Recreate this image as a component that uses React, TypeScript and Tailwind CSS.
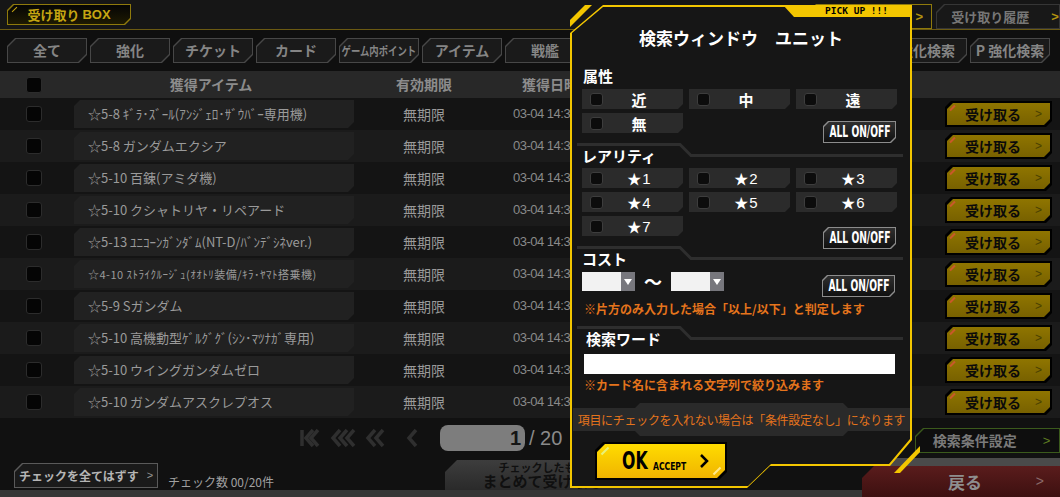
import React from "react";

const CUT8 = "[clip-path:polygon(8px_0,100%_0,100%_calc(100%_-_8px),calc(100%_-_8px)_100%,0_100%,0_8px)]";
const CUT6 = "[clip-path:polygon(6px_0,100%_0,100%_calc(100%_-_6px),calc(100%_-_6px)_100%,0_100%,0_6px)]";
const CUT5 = "[clip-path:polygon(5px_0,100%_0,100%_calc(100%_-_5px),calc(100%_-_5px)_100%,0_100%,0_5px)]";
const CUT_BR5 = "[clip-path:polygon(0_0,100%_0,100%_calc(100%_-_5px),calc(100%_-_5px)_100%,0_100%)]";
const CUT_TL8 = "[clip-path:polygon(8px_0,100%_0,100%_100%,0_100%,0_8px)]";
const CUT_TL12 = "[clip-path:polygon(12px_0,100%_0,100%_100%,0_100%,0_12px)]";
const POP_OUT = "[clip-path:polygon(0_28px,33px_0,100%_0,100%_435px,320px_461px,200px_461px,177px_100%,0_100%)]";
const POP_IN = "[clip-path:polygon(0_26px,31px_0,100%_0,100%_432px,317px_457px,199px_457px,176px_100%,0_100%)]";
const BAND = "[clip-path:polygon(0_5px,62px_5px,67px_0,calc(100%_-_67px)_0,calc(100%_-_62px)_5px,100%_5px,100%_calc(100%_-_5px),calc(100%_-_62px)_calc(100%_-_5px),calc(100%_-_67px)_100%,67px_100%,62px_calc(100%_-_5px),0_calc(100%_-_5px))]";

const COND = "font-['DejaVu_Sans_Condensed','DejaVu_Sans',sans-serif]";

type CutProps = {
  clip: string;
  border: string;
  fill: string;
  className?: string;
  innerClassName?: string;
  pad?: string;
  children?: React.ReactNode;
};

// bordered box with cut corners: outer = border colour, inner = fill
const Cut: React.FC<CutProps> = ({ clip, border, fill, className = "", innerClassName = "", pad = "p-px", children }) => (
  <div className={`${clip} ${border} ${pad} ${className}`}>
    <div className={`${clip} ${fill} relative h-full w-full ${innerClassName}`}>{children}</div>
  </div>
);

const tabsLeft = ["全て", "強化", "チケット", "カード", "ゲーム内ポイント", "アイテム", "戦艦"];
const tabsRight = ["強化検索", "P 強化検索"];

const items = [
  "☆5-8 ｷﾞﾗ･ｽﾞｰﾙ(ｱﾝｼﾞｪﾛ･ｻﾞｳﾊﾞｰ専用機)",
  "☆5-8 ガンダムエクシア",
  "☆5-10 百錬(アミダ機)",
  "☆5-10 クシャトリヤ・リペアード",
  "☆5-13 ﾕﾆｺｰﾝｶﾞﾝﾀﾞﾑ(NT-D/ﾊﾞﾝﾃﾞｼﾈver.)",
  "☆4-10 ｽﾄﾗｲｸﾙｰｼﾞｭ(ｵｵﾄﾘ装備/ｷﾗ･ﾔﾏﾄ搭乗機)",
  "☆5-9 Sガンダム",
  "☆5-10 高機動型ｹﾞﾙｸﾞｸﾞ(ｼﾝ･ﾏﾂﾅｶﾞ専用)",
  "☆5-10 ウイングガンダムゼロ",
  "☆5-10 ガンダムアスクレプオス",
];

const Tab: React.FC<{ label: string }> = ({ label }) => (
  <Cut
    clip={CUT8}
    border="bg-[#474747]"
    fill="bg-[#1a1a1a]"
    className="w-[80px] h-[25px] shrink-0"
    innerClassName="flex items-center justify-center font-bold text-[#858585] whitespace-nowrap"
  >
    {label.length > 6 ? (
      <span className="inline-block text-[12px] scale-x-[0.78]">{label}</span>
    ) : (
      <span className="text-[14px]">{label}</span>
    )}
  </Cut>
);

const RowCheck = () => <div className="w-[16px] h-[16px] rounded-[3px] border border-[#2c2c2c] bg-[#050505]" />;
const PopCheck = () => <div className="ml-[8px] w-[13px] h-[13px] rounded-[3px] border border-[#3d3d3d] bg-[#0c0c0c] shrink-0" />;

const Take = () => (
  <Cut
    clip={CUT6}
    border="bg-[#000]"
    pad="p-[2px]"
    fill="bg-[linear-gradient(#8f7500,#786100)]"
    className="w-[107px] h-[26px] mr-[8px]"
    innerClassName="flex items-center justify-center gap-[14px] pl-[10px]"
  >
    <span className="absolute left-[2px] top-[4px] w-[7px] h-[2px] bg-[#c9582a] -rotate-45" />
    <span className="text-[14px] font-bold text-[#0a0a0a]">受け取る</span>
    <span className="text-[12px] text-[#4a4000] font-['Liberation_Sans',sans-serif]">&gt;</span>
  </Cut>
);

const Opt: React.FC<{ label: React.ReactNode }> = ({ label }) => (
  <div className={`${CUT_BR5} h-[20px] bg-[#2b2b2b] flex items-center`}>
    <PopCheck />
    <div className="flex-1 pr-[8px] text-center text-white">{label}</div>
  </div>
);

const AllBtn: React.FC<{ className?: string }> = ({ className = "" }) => (
  <Cut
    clip={CUT5}
    border="bg-[#8c8c8c]"
    fill="bg-[linear-gradient(#2f2f2f,#101010)]"
    className={`w-[73px] h-[22px] ${className}`}
    innerClassName="flex items-center justify-center overflow-hidden"
  >
    <span className={`inline-block whitespace-nowrap text-white font-bold text-[15px] scale-x-[0.68] ${COND}`}>ALL ON/OFF</span>
  </Cut>
);

const SecHead: React.FC<{ label: string; className?: string }> = ({ label, className = "" }) => (
  <div className={`relative h-[25px] ${className}`}>
    <svg className="absolute left-[-5px] top-0" width="326" height="14" viewBox="0 0 326 14">
      <polyline points="0,1.5 103,1.5 114,12.5 326,12.5" fill="none" stroke="#2e2e2e" strokeWidth="3" />
    </svg>
    <div className="relative pt-[4px] text-[15px] leading-[18px] font-bold text-white">{label}</div>
  </div>
);

const Star: React.FC<{ n: number }> = ({ n }) => (
  <span className="text-[14px]">
    ★<span className="ml-[1px] font-['Liberation_Sans',sans-serif] text-[15px]">{n}</span>
  </span>
);

const Select = () => (
  <div className="w-[53px] h-[19px] bg-[#f2f2f2] flex justify-end">
    <div className="w-[14px] h-full bg-[#77777d] flex items-center justify-center">
      <svg width="8" height="6" viewBox="0 0 8 6">
        <path d="M0 0h8L4 6z" fill="#fff" />
      </svg>
    </div>
  </div>
);

const Chevron: React.FC<{ x: number }> = ({ x }) => (
  <path d={`M${x + 7} 2 L${x} 10 L${x + 7} 18`} fill="none" stroke="currentColor" strokeWidth="3.5" />
);

const App: React.FC = () => {
  return (
    <div className="relative w-[1060px] h-[497px] overflow-hidden bg-[#111111] font-['Noto_Sans_CJK_JP',sans-serif]">
      {/* top bar */}
      <div className="h-[30px] border-b border-[#6b5a12] bg-[#161616] flex items-start justify-between pt-[4px] pl-[7px]">
        <Cut
          clip={CUT6}
          border="bg-[#8f7a0c]"
          fill="bg-[linear-gradient(#050505,#1e1a02)]"
          className="w-[124px] h-[21px]"
          innerClassName="flex items-center justify-center text-[13px] font-bold text-[#c6a612]"
        >
          <span className="absolute left-[3px] top-[4px] w-[7px] h-[1px] bg-[#c6a612] -rotate-45" />
          受け取り <span className="ml-[3px] font-['Liberation_Sans',sans-serif]">BOX</span>
        </Cut>
        <div className="flex gap-[4px]">
          <Cut
            clip={CUT_TL8}
            border="bg-[#8f7a0c]"
            fill="bg-[#151515]"
            className="w-[124px] h-[25px]"
            innerClassName="flex items-center justify-end pr-[8px] text-[13px] font-bold text-[#b39410] font-['Liberation_Sans',sans-serif]"
          >
            &gt;
          </Cut>
          <Cut
            clip={CUT_TL8}
            border="bg-[#363636]"
            fill="bg-[#181818]"
            className="w-[124px] h-[25px]"
            innerClassName="flex items-center justify-center gap-[22px] pl-[14px]"
          >
            <span className="text-[13px] font-bold text-[#777]">受け取り履歴</span>
            <span className="text-[13px] font-bold text-[#b39410] font-['Liberation_Sans',sans-serif]">&gt;</span>
          </Cut>
        </div>
      </div>

      {/* category tabs */}
      <div className="h-[41px] flex justify-between items-start pt-[8px] pl-[7px] pr-[10px] bg-[#0f0f0f]">
        <div className="flex gap-[3px]">
          {tabsLeft.map((t) => (
            <Tab key={t} label={t} />
          ))}
        </div>
        <div className="flex gap-[3px]">
          {tabsRight.map((t) => (
            <Tab key={t} label={t} />
          ))}
        </div>
      </div>

      {/* header */}
      <div className="h-[27px] bg-[#282828] flex items-center text-[14px] font-bold text-[#8c8c8c]">
        <div className="w-[68px] flex justify-center">
          <RowCheck />
        </div>
        <div className="w-[286px] text-center">獲得アイテム</div>
        <div className="w-[140px] text-center">有効期限</div>
        <div className="ml-[28px]">獲得日時</div>
      </div>

      {/* rows */}
      {items.map((name, i) => (
        <div key={i} className={`h-[32px] flex items-center ${i % 2 === 0 ? "bg-[#141414]" : "bg-[#1b1b1b]"}`}>
          <div className="w-[68px] flex justify-center">
            <RowCheck />
          </div>
          <div
            className={`${CUT6} ml-[6px] w-[280px] h-[28px] bg-[#212121] flex items-center pl-[14px] text-[#9a9a9a] whitespace-nowrap ${
              i === 5 ? "text-[11px] tracking-[0.5px]" : "text-[13px]"
            }`}
          >
            {name}
          </div>
          <div className="w-[140px] text-center text-[14px] text-[#9a9a9a]">無期限</div>
          <div className="ml-[19px] text-[13px] tracking-[-0.5px] text-[#8a8a8a] font-['Liberation_Sans',sans-serif]">03-04 14:30</div>
          <div className="flex-1" />
          <Take />
        </div>
      ))}

      {/* pagination + search settings */}
      <div className="h-[40px] flex items-start">
        <div className="flex items-center pl-[300px] pt-[7px] h-[33px]">
          <svg width="125" height="20" viewBox="0 0 125 20" className="text-[#2f2f2f]">
            <path d="M2 2v16" stroke="currentColor" strokeWidth="3.5" />
            <Chevron x={6} />
            <Chevron x={11} />
            <Chevron x={33} />
            <Chevron x={40} />
            <Chevron x={47} />
            <Chevron x={68} />
            <Chevron x={76} />
            <Chevron x={109} />
          </svg>
          <div className="ml-[15px] w-[85px] h-[26px] rounded-[8px] bg-[#7d7d7d] flex items-center justify-end pr-[4px] text-[20px] font-bold text-[#151515] font-['Liberation_Sans',sans-serif]">
            1
          </div>
          <div className="ml-[4px] text-[20px] text-[#8a8a8a] font-['Liberation_Sans',sans-serif]">/ 20</div>
        </div>
        <div className="flex-1" />
        <Cut
          clip={CUT_TL8}
          border="bg-[#3b5a1c]"
          fill="bg-[#0e0e0e]"
          className="mt-[10px] w-[145px] h-[25px]"
          innerClassName="flex items-center justify-center gap-[26px] pl-[8px]"
        >
          <span className="text-[14px] font-bold text-[#7a7a7a]">検索条件設定</span>
          <span className="text-[13px] text-[#5f7d22] font-['Liberation_Sans',sans-serif]">&gt;</span>
        </Cut>
      </div>

      {/* bottom bar */}
      <div className="h-[39px] flex items-start bg-[linear-gradient(to_bottom,transparent_32px,#363636_32px)]">
        <Cut
          clip={CUT_TL8}
          border="bg-[#5a5a5a]"
          fill="bg-[#1a1a1a]"
          className="ml-[14px] mt-[5px] w-[144px] h-[25px] shrink-0"
          innerClassName="flex items-center justify-center gap-[8px]"
        >
          <span className="text-[12px] font-bold text-[#b5b5b5]">チェックを全てはずす</span>
          <span className="text-[11px] text-[#999] font-['Liberation_Sans',sans-serif]">&gt;</span>
        </Cut>
        <div className="ml-[10px] mt-[17px] w-[100px] shrink-0 whitespace-nowrap text-[12px] leading-[14px] text-[#a0a0a0]">チェック数 00/20件</div>
        <div
          className={`${CUT_TL12} ml-[177px] mt-[2px] w-[195px] h-[30px] shrink-0 bg-[linear-gradient(#3d3d3d,#2a2a2a)] flex flex-col items-center justify-center font-bold text-[#101010]`}
        >
          <span className="text-[11px] leading-[12px]">チェックしたもの</span>
          <span className="text-[15px] leading-[16px]">まとめて受け取る</span>
        </div>
        <div className="flex-1" />
        <div className="w-[198px] h-full flex flex-col shrink-0">
          <div className="h-[8px] bg-[#4a4a4a]" />
          <div className={`${CUT_TL12} flex-1 bg-[linear-gradient(#5a1c1c,#3d1010)] flex items-center pl-[86px] pr-[16px]`}>
            <span className="text-[17px] font-bold text-[#8e8e8e]">戻る</span>
            <span className="ml-auto text-[14px] text-[#8a6a6a] font-['Liberation_Sans',sans-serif]">&gt;</span>
          </div>
        </div>
      </div>

      {/* search window overlay */}
      <div className="absolute left-[570px] top-[5px] w-[342px] h-[483px]">
        <div className={`absolute inset-0 bg-[#f3c600] ${POP_OUT}`} />
        <div className={`absolute inset-[2px] bg-[#161616] ${POP_IN}`} />
        <div className="absolute left-0 top-0 w-[24px] h-[24px] bg-[#f3c600] [clip-path:polygon(15px_0,22px_0,0_22px,0_15px)]" />
        <div className="absolute left-[324px] top-[441px] w-[26px] h-[27px] bg-[#f3c600] [clip-path:polygon(100%_0,100%_6px,6px_100%,0_100%)]" />
        <div className="absolute right-0 top-0 h-[12px] w-[129px] bg-[#f3c600] [clip-path:polygon(0_0,100%_0,100%_100%,11px_100%)] flex items-center justify-end pr-[24px] text-[9.5px] font-bold text-black font-['DejaVu_Sans_Mono',monospace]">
          PICK UP !!!
        </div>

        <div className="relative flex flex-col pl-[12px] pr-[16px] pt-[23px]">
          <div className="h-[20px] leading-[20px] text-center text-[17px] font-bold text-white pl-[4px]">検索ウィンドウ　ユニット</div>

          <div className="mt-[19px] h-[18px] leading-[18px] text-[15px] font-bold text-white pl-[1px]">属性</div>
          <div className="mt-[4px] grid grid-cols-[101px_101px_101px] gap-x-[6px] gap-y-[4px] items-start">
            <Opt label={<span className="text-[15px] font-bold">近</span>} />
            <Opt label={<span className="text-[15px] font-bold">中</span>} />
            <Opt label={<span className="text-[15px] font-bold">遠</span>} />
            <Opt label={<span className="text-[15px] font-bold">無</span>} />
            <div />
            <AllBtn className="mt-[8px] justify-self-end mr-[1px]" />
          </div>

          <SecHead label="レアリティ" />
          <div className="grid grid-cols-[101px_101px_101px] gap-x-[6px] gap-y-[4px] items-start">
            {[1, 2, 3, 4, 5, 6, 7].map((n) => (
              <Opt key={n} label={<Star n={n} />} />
            ))}
            <div />
            <AllBtn className="mt-[11px] justify-self-end mr-[1px]" />
          </div>

          <SecHead label="コスト" className="-mt-[3px]" />
          <div className="mt-[1px] flex items-start">
            <Select />
            <div className="w-[36px] text-center text-[18px] leading-[19px] font-bold text-white">〜</div>
            <Select />
            <div className="flex-1" />
            <AllBtn className="mt-[3px] mr-[1px]" />
          </div>
          <div className="mt-[4px] h-[16px] leading-[16px] text-[12px] font-bold text-[#e5741c] pl-[2px] whitespace-nowrap">
            ※片方のみ入力した場合「以上/以下」と判定します
          </div>

          <SecHead label="検索ワード" className="mt-[9px] pl-[4px]" />
          <div className="mt-[3px] ml-[2px] w-[311px] h-[20px] bg-white" />
          <div className="mt-[3px] h-[16px] leading-[16px] text-[12px] font-bold text-[#e5741c] pl-[2px]">
            ※カード名に含まれる文字列で絞り込みます
          </div>

          <div
            className={`${BAND} mt-[10px] -ml-[9px] -mr-[14px] h-[33px] bg-[#2a2a2a] flex items-center justify-center text-[12px] tracking-[-0.3px] text-[#e5741c] whitespace-nowrap`}
          >
            項目にチェックを入れない場合は「条件設定なし」になります
          </div>

          <Cut
            clip={CUT8}
            border="bg-black"
            pad="p-[2px]"
            fill="bg-[linear-gradient(#ffdc00,#f0b400)]"
            className="mt-[6px] ml-[13px] w-[132px] h-[38px]"
            innerClassName="flex items-center pl-[25px] text-black"
          >
            <span className="absolute left-[3px] top-[6px] w-[10px] h-[2px] bg-[#e8f27a] -rotate-45" />
            <span className="absolute right-[3px] bottom-[6px] w-[10px] h-[2px] bg-[#ffe98a] -rotate-45" />
            <span className="inline-block w-[27px] whitespace-nowrap">
              <span className={`inline-block origin-left scale-x-[0.7] text-[25px] leading-none font-bold ${COND}`}>OK</span>
            </span>
            <span className="ml-[4px] mt-[4px] inline-block w-[34px] whitespace-nowrap">
              <span className={`inline-block origin-left scale-x-[0.85] text-[10px] font-bold ${COND}`}>ACCEPT</span>
            </span>
            <svg className="ml-[12px]" width="10" height="16" viewBox="0 0 10 16">
              <path d="M2 2l6 6-6 6" fill="none" stroke="#000" strokeWidth="2.5" />
            </svg>
          </Cut>
        </div>
      </div>
    </div>
  );
};

export default App;
